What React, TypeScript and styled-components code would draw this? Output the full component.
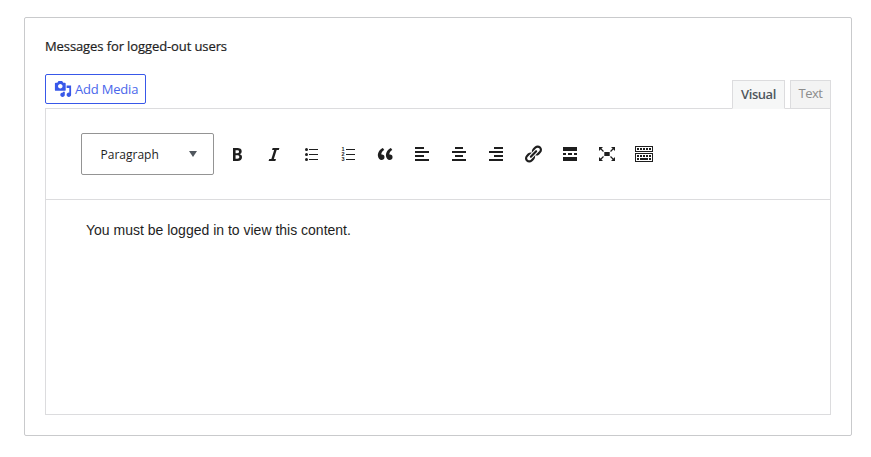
import React from "react";
import styled, { createGlobalStyle } from "styled-components";

const Global = createGlobalStyle`
  * { box-sizing: border-box; }
  body { margin: 0; background: #fff; font-family: "Open Sans", "Noto Sans", sans-serif; }
`;

const Card = styled.section`
  width: 828px;
  height: 419px;
  margin: 17px 0 0 24px;
  padding: 19px 20px 20px;
  border: 1px solid #c9cacc;
  border-radius: 2px;
`;

const Title = styled.h2`
  margin: 0;
  height: 18px;
  line-height: 18px;
  font-size: 13px;
  font-weight: 500;
  letter-spacing: -0.1px;
  color: #1e1e1e;
  -webkit-text-stroke: 0.2px #1e1e1e;
  white-space: nowrap;
`;

const Tools = styled.div`
  display: flex;
  justify-content: space-between;
  height: 53px;
  padding-top: 19px;
`;

const MediaButton = styled.button`
  display: flex;
  align-items: center;
  gap: 3.5px;
  width: 101px;
  height: 30px;
  padding: 0 0 1px 7.5px;
  border: 1px solid #3858e9;
  border-radius: 2px;
  background: #fff;
  color: #4a67eb;
  font-family: inherit;
  font-size: 13px;
  letter-spacing: -0.2px;
  white-space: nowrap;
`;

const Tabs = styled.div`
  display: flex;
  gap: 5px;
  height: 29px;
  margin-top: 6px;
`;

const Tab = styled.button<{ $active?: boolean }>`
  position: relative;
  width: ${(p) => (p.$active ? 53 : 41)}px;
  height: ${(p) => (p.$active ? 29 : 28)}px;
  padding: 0 0 ${(p) => (p.$active ? 2 : 3)}px;
  border: 1px solid #dcdcde;
  border-bottom: ${(p) => (p.$active ? "1px solid #f6f7f7" : "0")};
  background: ${(p) => (p.$active ? "#f6f7f7" : "#f3f3f3")};
  color: ${(p) => (p.$active ? "#50575e" : "#8c8c8c")};
  font-family: inherit;
  font-size: 13px;
  font-weight: ${(p) => (p.$active ? 600 : 400)};
  letter-spacing: -0.45px;
`;

const Editor = styled.div`
  height: 307px;
  border: 1px solid #dcdcde;
`;

const Toolbar = styled.div`
  display: flex;
  align-items: center;
  height: 91px;
  padding-left: 35px;
  border-bottom: 1px solid #dcdcde;
`;

const FormatSelect = styled.button`
  display: flex;
  align-items: center;
  justify-content: space-between;
  width: 133px;
  height: 42px;
  margin-right: 12.5px;
  padding: 0 16px 0 18.5px;
  border: 1px solid #949494;
  border-radius: 2px;
  background: #fff;
  color: #1e1e1e;
  font-family: inherit;
  font-size: 12px;
  letter-spacing: 0;
`;

const IconRow = styled.div`
  display: flex;
  gap: 17px;
`;

const Icon = styled.svg`
  display: block;
  width: 20px;
  height: 20px;
  fill: #1e1e1e;
`;

const MediaIcon = styled(Icon)`
  width: 18px;
  height: 18px;
  fill: #3858e9;
`;

const Caret = styled.svg`
  width: 8px;
  height: 6px;
  fill: #50575e;
`;

const Content = styled.p`
  margin: 0;
  padding: 21px 0 0 40px;
  font: 14px/18px "Liberation Sans", Arial, sans-serif;
  color: #1e1e1e;
  white-space: nowrap;
`;

const Digit = styled.text`
  font: bold 5.5px "Liberation Sans", Arial, sans-serif;
`;

const icons: React.ReactNode[] = [
  <path d="M6 4v13h4.54c1.37 0 2.46-.33 3.26-1 .8-.66 1.2-1.58 1.2-2.77 0-.84-.17-1.51-.51-2.01s-.9-.85-1.67-1.03v-.09c.57-.1 1.02-.4 1.36-.9s.51-1.13.51-1.91c0-1.14-.39-1.98-1.17-2.5C12.75 4.26 11.5 4 9.78 4H6zm2.57 5.15V6.26h1.36c.73 0 1.27.11 1.61.32.34.22.51.58.51 1.07 0 .54-.16.92-.47 1.15s-.82.35-1.51.35h-1.5zm0 2.19h1.6c1.44 0 2.16.53 2.16 1.61 0 .6-.17 1.05-.51 1.34s-.86.43-1.57.43H8.57v-3.38z" />,
  <path d="M14.78 6h-2.13l-2.8 9h2.12l-.62 2H4.6l.62-2h2.14l2.8-9H8.03l.62-2h6.75z" />,
  <>
    <circle cx="5.5" cy="5.5" r="1.5" />
    <circle cx="5.5" cy="10.5" r="1.5" />
    <circle cx="5.5" cy="15.5" r="1.5" />
    <path d="M8 5h9v1H8zM8 10h9v1H8zM8 15h9v1H8z" />
  </>,
  <>
    <Digit x="3.6" y="7">1</Digit>
    <Digit x="3.6" y="12.2">2</Digit>
    <Digit x="3.6" y="17.2">3</Digit>
    <path d="M8 5h9v1H8zM8 10h9v1H8zM8 15h9v1H8z" />
  </>,
  <path d="M9.49 13.22c0-.74-.2-1.38-.61-1.9-.62-.78-1.83-.88-2.53-.72-.29-1.65 1.11-3.75 2.92-4.65L7.88 4c-2.73 1.3-5.42 4.28-4.96 8.05C3.21 14.43 4.59 16 6.54 16c.85 0 1.56-.25 2.12-.75s.83-1.18.83-2.03zm8.05 0c0-.74-.2-1.38-.61-1.9-.63-.78-1.83-.88-2.53-.72-.29-1.65 1.11-3.75 2.92-4.65L15.93 4c-2.73 1.3-5.41 4.28-4.95 8.05.28 2.38 1.66 3.95 3.61 3.95.85 0 1.56-.25 2.12-.75s.83-1.18.83-2.03z" />,
  <path d="M12 5V3H3v2h9zm5 4V7H3v2h14zm-5 4v-2H3v2h9zm5 4v-2H3v2h14z" />,
  <path d="M14 5V3H6v2h8zm3 4V7H3v2h14zm-3 4v-2H6v2h8zm3 4v-2H3v2h14z" />,
  <path d="M17 5V3H8v2h9zm0 4V7H3v2h14zm0 4v-2H8v2h9zm0 4v-2H3v2h14z" />,
  <path d="M17.74 2.76c1.68 1.69 1.68 4.41 0 6.1l-1.53 1.52c-1.12 1.12-2.7 1.47-4.14 1.09l2.62-2.61.76-.77.76-.76c.84-.84.84-2.2 0-3.04-.84-.85-2.2-.85-3.04 0l-.77.76-3.38 3.38c-.37-1.44-.02-3.02 1.1-4.14l1.52-1.53c1.69-1.68 4.42-1.68 6.1 0zM8.59 13.43l5.34-5.34c.42-.42.42-1.1 0-1.52-.44-.43-1.13-.39-1.53 0l-5.33 5.34c-.42.42-.42 1.1 0 1.52.44.43 1.13.39 1.52 0zm-.76 2.29l4.14-4.15c.38 1.44.03 3.02-1.09 4.14l-1.52 1.53c-1.69 1.68-4.41 1.68-6.1 0-1.68-1.68-1.68-4.42 0-6.1l1.53-1.52c1.12-1.12 2.7-1.47 4.14-1.1l-4.14 4.15c-.85.84-.85 2.2 0 3.05.84.84 2.2.84 3.04 0z" />,
  <path d="M17 7V3H3v4h14zM6 11V9H3v2h3zm6 0V9H8v2h4zm5 0V9h-3v2h3zm0 6v-4H3v4h14z" />,
  <>
    <path d="M7.3 8h5.4v4H7.3zM2 3h4L2 7zM18 3v4l-4-4zM2 17v-4l4 4zM18 17h-4l4-4z" />
    <path d="M3.5 4.5l3 3M16.5 4.5l-3 3M3.5 15.5l3-3M16.5 15.5l-3-3" stroke="#1e1e1e" strokeWidth="1.2" />
  </>,
  <path d="M19 2v6H1V2h18zm-1 5V3H2v4h16zM5 4v2H3V4h2zm3 0v2H6V4h2zm3 0v2H9V4h2zm3 0v2h-2V4h2zm3 0v2h-2V4h2zm2 5v9H1V9h18zm-1 8v-7H2v7h16zM5 11v2H3v-2h2zm3 0v2H6v-2h2zm3 0v2H9v-2h2zm3 0v2h-2v-2h2zm3 0v2h-2v-2h2zM5 14v2H3v-2h2zm9 0v2H6v-2h8zm3 0v2h-2v-2h2z" />,
];

export default function App() {
  return (
    <>
      <Global />
      <Card>
        <Title>Messages for logged-out users</Title>
        <Tools>
          <MediaButton>
            <MediaIcon viewBox="0 0 20 20">
              <path d="M13 11V4c0-.55-.45-1-1-1h-1.67L9 1H5L3.67 3H2c-.55 0-1 .45-1 1v7c0 .55.45 1 1 1h10c.55 0 1-.45 1-1zM7 4.5c1.38 0 2.5 1.12 2.5 2.5S8.38 9.5 7 9.5 4.5 8.38 4.5 7 5.62 4.5 7 4.5zM14 6h5v10.5c0 1.38-1.12 2.5-2.5 2.5S14 17.88 14 16.5s1.12-2.5 2.5-2.5c.17 0 .34.02.5.05V9h-3V6zm-4 8.05V13h2v3.5c0 1.38-1.12 2.5-2.5 2.5S7 17.88 7 16.5 8.12 14 9.5 14c.17 0 .34.02.5.05z" />
            </MediaIcon>
            Add Media
          </MediaButton>
          <Tabs>
            <Tab $active>Visual</Tab>
            <Tab>Text</Tab>
          </Tabs>
        </Tools>
        <Editor>
          <Toolbar>
            <FormatSelect>
              Paragraph
              <Caret viewBox="0 0 8 6">
                <path d="M0 0h8L4 6z" />
              </Caret>
            </FormatSelect>
            <IconRow>
              {icons.map((shape, i) => (
                <Icon key={i} viewBox="0 0 20 20">
                  {shape}
                </Icon>
              ))}
            </IconRow>
          </Toolbar>
          <Content>You must be logged in to view this content.</Content>
        </Editor>
      </Card>
    </>
  );
}
